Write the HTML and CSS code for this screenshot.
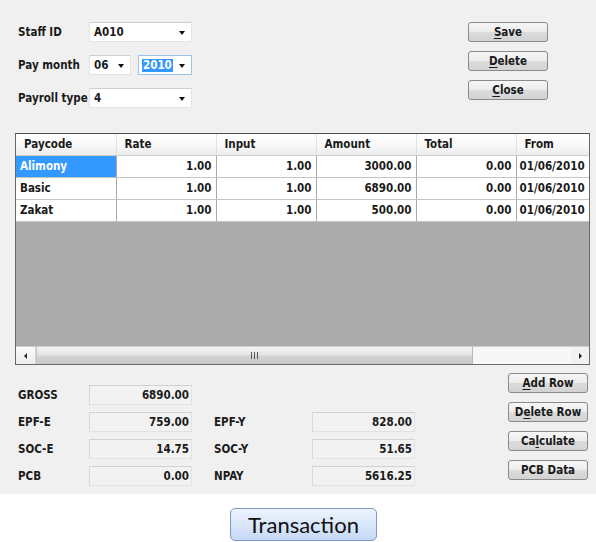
FILE: index.html
```html
<!DOCTYPE html>
<html>
<head>
<meta charset="utf-8">
<link rel="stylesheet" href="styles.css">
</head>
<body>
<div class="panel">
  <div class="top">
    <div class="form">
      <div class="label">Staff ID</div>
      <div class="combo w-full"><span class="val">A010</span><span class="arrow"></span></div>
      <div class="label">Pay month</div>
      <div class="pair">
        <div class="combo w-mon"><span class="val">06</span><span class="arrow"></span></div>
        <div class="combo w-year focus"><span class="val sel">2010</span><span class="arrow"></span></div>
      </div>
      <div class="label">Payroll type</div>
      <div class="combo w-full"><span class="val">4</span><span class="arrow"></span></div>
    </div>
    <div class="btncol">
      <button class="btn"><u>S</u>ave</button>
      <button class="btn"><u>D</u>elete</button>
      <button class="btn"><u>C</u>lose</button>
    </div>
  </div>

  <div class="grid">
    <div class="gridclip">
      <table class="tbl">
        <colgroup>
          <col class="c1"><col class="c"><col class="c"><col class="c"><col class="c"><col class="c">
        </colgroup>
        <thead>
          <tr><th>Paycode</th><th>Rate</th><th>Input</th><th>Amount</th><th>Total</th><th>From</th></tr>
        </thead>
        <tbody>
          <tr><td class="code selcell">Alimony</td><td class="num">1.00</td><td class="num">1.00</td><td class="num">3000.00</td><td class="num">0.00</td><td class="date">01/06/2010</td></tr>
          <tr><td class="code">Basic</td><td class="num">1.00</td><td class="num">1.00</td><td class="num">6890.00</td><td class="num">0.00</td><td class="date">01/06/2010</td></tr>
          <tr><td class="code">Zakat</td><td class="num">1.00</td><td class="num">1.00</td><td class="num">500.00</td><td class="num">0.00</td><td class="date">01/06/2010</td></tr>
        </tbody>
      </table>
    </div>
    <div class="empty"></div>
    <div class="hscroll">
      <div class="sbtn"><span class="tri-l"></span></div>
      <div class="thumb"><span class="grip"></span></div>
      <div class="track"></div>
      <div class="sbtn right"><span class="tri-r"></span></div>
    </div>
  </div>

  <div class="bottom">
    <div class="totals">
      <div class="label">GROSS</div><div class="field">6890.00</div><div></div><div></div>
      <div class="label">EPF-E</div><div class="field">759.00</div><div class="label">EPF-Y</div><div class="field">828.00</div>
      <div class="label">SOC-E</div><div class="field">14.75</div><div class="label">SOC-Y</div><div class="field">51.65</div>
      <div class="label">PCB</div><div class="field">0.00</div><div class="label">NPAY</div><div class="field">5616.25</div>
    </div>
    <div class="btncol">
      <button class="btn"><u>A</u>dd Row</button>
      <button class="btn">D<u>e</u>lete Row</button>
      <button class="btn">Ca<u>l</u>culate</button>
      <button class="btn">PCB Data</button>
    </div>
  </div>
</div>
<div class="footer">
  <button class="tab">Transaction</button>
</div>
</body>
</html>
```
FILE: styles.css
```css
* { box-sizing: border-box; }
html, body { margin: 0; padding: 0; background: #ffffff; }
body {
  width: 596px;
  font-family: "DejaVu Sans Condensed", "DejaVu Sans", sans-serif;
  font-stretch: condensed;
  font-weight: bold;
  font-size: 11.5px;
  color: #1a1a1a;
}
.panel {
  height: 494px;
  background: #f0f0f0;
  overflow: hidden;
}
.top {
  display: flex;
  justify-content: space-between;
  align-items: flex-start;
  padding: 22px 48px 0 18px;
}
.form {
  display: grid;
  grid-template-columns: 71px 103px;
  row-gap: 13px;
  align-items: center;
}
.label { line-height: 20px; white-space: nowrap; }
.pair { display: flex; gap: 7px; }
.combo {
  position: relative;
  height: 20px;
  background: #ffffff;
  border: 1px solid #e4e4e4;
  border-top-color: #cfcfcf;
  display: flex;
  align-items: center;
  padding-left: 3px;
}
.combo.w-full { width: 103px; }
.combo.w-mon { width: 42px; }
.combo.w-year { width: 54px; }
.combo.focus { border-color: #9ec3e8; }
.val { line-height: 13px; padding: 0 1px; }
.val.sel { background: #3399ff; color: #ffffff; }
.arrow {
  position: absolute;
  right: 6px;
  top: 8px;
  width: 0; height: 0;
  border-left: 3px solid transparent;
  border-right: 3px solid transparent;
  border-top: 4px solid #111;
}
.btncol { display: flex; flex-direction: column; gap: 9px; }
.btn {
  width: 80px;
  height: 20px;
  padding: 0;
  font: inherit;
  color: #1a1a1a;
  border: 1px solid #8a8a8a;
  border-radius: 3px;
  background: linear-gradient(#f6f6f6, #ececec 50%, #dcdcdc 51%, #d3d3d3);
  text-align: center;
  line-height: 17px;
}
.btn u { text-decoration-thickness: 1px; text-underline-offset: 2px; }

.grid {
  margin: 25px 0 0 15px;
  width: 575px;
  height: 232px;
  border: 1px solid #6a6a6a;
  border-top-color: #4e4e4e;
  background: #ababab;
  display: flex;
  flex-direction: column;
}
.gridclip { overflow: hidden; width: 573px; }
.tbl {
  table-layout: fixed;
  width: 600px;
  border-collapse: collapse;
}
.tbl col.c1 { width: 100px; }
.tbl col.c { width: 100px; }
.tbl th {
  height: 21px;
  text-align: left;
  padding: 0 0 0 8px;
  background: linear-gradient(#ffffff, #f7f7f7 60%, #ececec);
  border-right: 1px solid #e2e2e2;
  border-bottom: 1px solid #cfcfcf;
  font-weight: bold;
}
.tbl td {
  height: 22px;
  background: #ffffff;
  border-right: 1px solid #a8a8a8;
  border-bottom: 1px solid #c4c4c4;
  white-space: nowrap;
  overflow: hidden;
}
.tbl td.code { padding-left: 4px; }
.tbl td.num { text-align: right; padding-right: 4px; }
.tbl td.date { padding-left: 3px; }
.tbl td.selcell { background: #3399ff; color: #ffffff; }
.empty { flex: 1; }
.hscroll {
  height: 18px;
  display: flex;
  background: #f2f2f2;
  border-top: 1px solid #d0d0d0;
}
.sbtn {
  width: 20px;
  background: linear-gradient(#fbfbfb, #ececec);
  border-right: 1px solid #d6d6d6;
  display: flex;
  align-items: center;
  justify-content: center;
}
.sbtn.right { border-right: none; border-left: none; width: 18px; background: transparent; }
.tri-l {
  width: 0; height: 0;
  border-top: 3px solid transparent;
  border-bottom: 3px solid transparent;
  border-right: 3px solid #222;
}
.tri-r {
  width: 0; height: 0;
  border-top: 3px solid transparent;
  border-bottom: 3px solid transparent;
  border-left: 3px solid #222;
}
.thumb {
  width: 437px;
  background: linear-gradient(#f4f4f4, #e4e4e4 45%, #d2d2d2 55%, #c9c9c9);
  border-left: 1px solid #c4c4c4;
  border-right: 1px solid #b8b8b8;
  display: flex;
  align-items: center;
  justify-content: center;
}
.grip {
  width: 7px;
  height: 7px;
  background: repeating-linear-gradient(90deg, #555 0 1px, transparent 1px 3px);
}
.track { flex: 1; background: #f7f7f7; }

.bottom {
  display: flex;
  justify-content: space-between;
  align-items: flex-start;
  margin-top: 8px;
  padding: 0 8px 0 18px;
}
.totals {
  padding-top: 12px;
  display: grid;
  grid-template-columns: 71px 103px 120px 103px;
  row-gap: 7px;
  align-items: center;
}
.totals .label:nth-child(4n+3) { padding-left: 22px; }
.field {
  height: 20px;
  line-height: 18px;
  background: #f2f2f2;
  border: 1px solid #e2e2e2;
  border-top-color: #d2d2d2;
  border-left-color: #d8d8d8;
  text-align: right;
  padding-right: 2px;
}
.footer {
  height: 48px;
  display: flex;
  justify-content: center;
  padding-top: 14px;
  padding-left: 11px;
}
.tab {
  width: 147px;
  height: 33px;
  padding: 0;
  font-family: Lato, "Open Sans", sans-serif;
  font-weight: normal;
  font-size: 22px;
  color: #111;
  border: 1px solid #7f98c2;
  border-radius: 5px;
  background: linear-gradient(#edf3fd, #d9e6fa 50%, #c7d9f5);
  line-height: 30px;
}
```
